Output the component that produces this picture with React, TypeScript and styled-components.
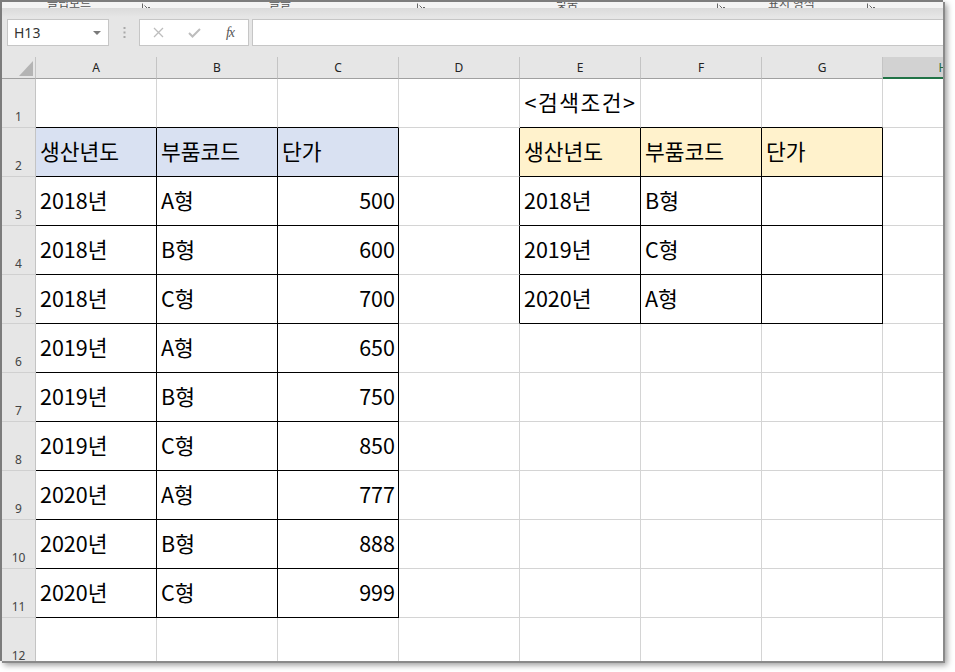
import * as React from 'react'
import styled, {createGlobalStyle} from 'styled-components'

const GlobalStyle = createGlobalStyle`
  html, body {
    margin: 0;
    padding: 0;
    background: #ffffff;
  }
  body {
    width: 955px;
    height: 672px;
    overflow: hidden;
    font-family: "Noto Sans", "Noto Sans CJK KR", sans-serif;
  }
`

const Window = styled.div`
  box-sizing: border-box;
  width: 943px;
  height: 661px;
  border-top: 2px solid #7c7c7c;
  border-left: 2px solid #7c7c7c;
  background: #e6e6e6;
  box-shadow: 2px 2px 0 #8a8a8a, 4px 4px 6px rgba(0, 0, 0, 0.4);
  overflow: hidden;
  display: flex;
  flex-direction: column;
`

// ---- ribbon remains (only the bottom edge of the group labels shows)

const Ribbon = styled.div`
  height: 6px;
  flex-shrink: 0;
  display: flex;
  overflow: hidden;
  background: #f3f3f3;
`

type RibbonGroupProps = {
  $width: number
  $labelLeft: number
}

const RibbonGroup = styled.div<RibbonGroupProps>`
  box-sizing: border-box;
  width: ${({$width}) => $width}px;
  height: 6px;
  flex-shrink: 0;
  display: flex;
  align-items: flex-end;
  justify-content: space-between;
  padding-left: ${({$labelLeft}) => $labelLeft}px;
  padding-right: 3px;
`

const GroupLabel = styled.span`
  font: 12px/12px "Noto Sans CJK KR", sans-serif;
  color: #555;
  white-space: nowrap;
  margin-bottom: -1px;
`

const Launcher = styled.svg`
  width: 8px;
  height: 8px;
  margin-bottom: -3px;
`

// ---- formula bar

const FormulaBar = styled.div`
  flex-shrink: 0;
  display: flex;
  height: 27px;
  padding: 11px 0 0 5px;
  background: linear-gradient(#dadada, #e6e6e6 9px);
`

const NameBox = styled.div`
  box-sizing: border-box;
  width: 102px;
  display: flex;
  align-items: center;
  justify-content: space-between;
  padding: 0 7px 0 6px;
  background: #ffffff;
  border: 1px solid #c6c6c6;
  font-size: 14px;
  color: #333;
`

const Caret = styled.span`
  width: 0;
  height: 0;
  border-left: 4px solid transparent;
  border-right: 4px solid transparent;
  border-top: 4px solid #7a7a7a;
`

const Grip = styled.div`
  width: 30px;
  display: flex;
  align-items: center;
  justify-content: center;
`

const FxBox = styled.div`
  box-sizing: border-box;
  width: 110px;
  display: flex;
  background: #ffffff;
  border: 1px solid #c6c6c6;
`

const IconSlot = styled.div`
  width: 36px;
  display: flex;
  align-items: center;
  justify-content: center;
`

const FxText = styled.span`
  font: italic 14px "Liberation Serif", serif;
  color: #555;
  letter-spacing: -1px;
`

const FormulaInput = styled.div`
  flex: 1;
  margin-left: 3px;
  background: #ffffff;
  border: 1px solid #c6c6c6;
  border-right: none;
`

// ---- sheet

const SheetArea = styled.div`
  padding-top: 11px;
`

const Grid = styled.div`
  display: grid;
  grid-template-columns: 34px repeat(8, 121px);
  grid-template-rows: 22px;
  grid-auto-rows: 49px;
`

const Corner = styled.div`
  box-sizing: border-box;
  display: flex;
  align-items: flex-end;
  justify-content: flex-end;
  padding: 0 2px 2px 0;
  border-right: 1px solid #c4c4c4;
  border-bottom: 1px solid #a0a0a0;
`

type ColHeaderProps = {
  $selected?: boolean
}

const ColHeader = styled.div<ColHeaderProps>`
  box-sizing: border-box;
  display: flex;
  align-items: center;
  justify-content: center;
  font-size: 12px;
  color: ${({$selected}) => ($selected ? '#1f6b40' : '#222')};
  background: ${({$selected}) => ($selected ? '#d2d2d2' : '#e6e6e6')};
  border-right: 1px solid #c4c4c4;
  border-bottom: ${({$selected}) =>
    $selected ? '2px solid #217346' : '1px solid #a0a0a0'};
`

const RowHeader = styled.div`
  box-sizing: border-box;
  display: flex;
  align-items: flex-end;
  justify-content: center;
  padding-bottom: 3px;
  font-size: 12px;
  line-height: 14px;
  color: #444;
  background: #e6e6e6;
  border-right: 1px solid #c4c4c4;
  border-bottom: 1px solid #d0d0d0;
`

type CellProps = {
  $align: 'left' | 'right' | 'center'
  $fill?: string
  $rightDark: boolean
  $bottomDark: boolean
}

const Cell = styled.div<CellProps>`
  box-sizing: border-box;
  display: flex;
  align-items: center;
  justify-content: ${({$align}) =>
    $align === 'right' ? 'flex-end' : $align === 'center' ? 'center' : 'flex-start'};
  padding: 0 3px 3px 4px;
  font-family: "Noto Sans CJK KR", "Noto Sans", sans-serif;
  font-size: 21.5px;
  color: #000;
  white-space: nowrap;
  background: ${({$fill}) => $fill || '#ffffff'};
  border-right: 1px solid ${({$rightDark}) => ($rightDark ? '#000' : '#d4d4d4')};
  border-bottom: 1px solid ${({$bottomDark}) => ($bottomDark ? '#000' : '#d4d4d4')};
`

const TitleText = styled.span`
  letter-spacing: 1.5px;
`

const COLUMNS = ['A', 'B', 'C', 'D', 'E', 'F', 'G', 'H']

const sheet: string[][] = [
  ['', '', '', '', '<검색조건>', '', '', ''],
  ['생산년도', '부품코드', '단가', '', '생산년도', '부품코드', '단가', ''],
  ['2018년', 'A형', '500', '', '2018년', 'B형', '', ''],
  ['2018년', 'B형', '600', '', '2019년', 'C형', '', ''],
  ['2018년', 'C형', '700', '', '2020년', 'A형', '', ''],
  ['2019년', 'A형', '650', '', '', '', '', ''],
  ['2019년', 'B형', '750', '', '', '', '', ''],
  ['2019년', 'C형', '850', '', '', '', '', ''],
  ['2020년', 'A형', '777', '', '', '', '', ''],
  ['2020년', 'B형', '888', '', '', '', '', ''],
  ['2020년', 'C형', '999', '', '', '', '', ''],
  ['', '', '', '', '', '', '', ''],
]

// bordered ranges, 0-based [rowFrom, rowTo, colFrom, colTo]
const borderedRanges = [
  [1, 10, 0, 2],
  [1, 4, 4, 6],
]

const inBordered = (r: number, c: number) =>
  borderedRanges.some(([r0, r1, c0, c1]) => r >= r0 && r <= r1 && c >= c0 && c <= c1)

const fillFor = (r: number, c: number) => {
  if (r !== 1) return undefined
  if (c <= 2) return '#d9e1f2'
  if (c >= 4 && c <= 6) return '#fff2cc'
  return undefined
}

const isTitle = (r: number, c: number) => r === 0 && c === 4

const alignFor = (r: number, c: number, value: string): 'left' | 'right' | 'center' => {
  if (isTitle(r, c)) return 'center'
  if (/^\d+$/.test(value)) return 'right'
  return 'left'
}

const ribbonGroups = [
  {label: '클립보드', width: 151, left: 45},
  {label: '글꼴', width: 275, left: 116},
  {label: '맞춤', width: 300, left: 128},
  {label: '표시 형식', width: 150, left: 40},
]

const LauncherIcon = () => (
  <Launcher viewBox="0 0 8 8">
    <path d="M0.5 0.5 V7.5 H7.5 V4" fill="none" stroke="#666" strokeWidth="1" />
    <path d="M2.5 2.5 L6.5 6.5 M4 6.5 H6.5 V4" fill="none" stroke="#666" strokeWidth="1" />
  </Launcher>
)

export default function App() {
  return (
    <>
      <GlobalStyle />
      <Window>
        <Ribbon>
          {ribbonGroups.map(g => (
            <RibbonGroup key={g.label} $width={g.width} $labelLeft={g.left}>
              <GroupLabel>{g.label}</GroupLabel>
              <LauncherIcon />
            </RibbonGroup>
          ))}
        </Ribbon>

        <FormulaBar>
          <NameBox>
            <span>H13</span>
            <Caret />
          </NameBox>
          <Grip>
            <svg width="3" height="11" viewBox="0 0 3 11">
              <rect x="0.5" y="0" width="2" height="2" fill="#a8a8a8" />
              <rect x="0.5" y="4.5" width="2" height="2" fill="#a8a8a8" />
              <rect x="0.5" y="9" width="2" height="2" fill="#a8a8a8" />
            </svg>
          </Grip>
          <FxBox>
            <IconSlot>
              <svg width="11" height="11" viewBox="0 0 11 11">
                <path d="M1 1 L10 10 M10 1 L1 10" stroke="#bdbdbd" strokeWidth="1.3" />
              </svg>
            </IconSlot>
            <IconSlot>
              <svg width="13" height="10" viewBox="0 0 13 10">
                <path d="M1 5 L4.5 8.5 L12 1" fill="none" stroke="#bdbdbd" strokeWidth="2" />
              </svg>
            </IconSlot>
            <IconSlot>
              <FxText>fx</FxText>
            </IconSlot>
          </FxBox>
          <FormulaInput />
        </FormulaBar>

        <SheetArea>
          <Grid>
            <Corner>
              <svg width="14" height="15" viewBox="0 0 14 15">
                <polygon points="14,0 14,15 0,15" fill="#b4b4b4" />
              </svg>
            </Corner>
            {COLUMNS.map(col => (
              <ColHeader key={col} $selected={col === 'H'}>
                {col}
              </ColHeader>
            ))}

            {sheet.map((row, r) => (
              <React.Fragment key={r}>
                <RowHeader>{r + 1}</RowHeader>
                {row.map((value, c) => (
                  <Cell
                    key={c}
                    $align={alignFor(r, c, value)}
                    $fill={fillFor(r, c)}
                    $rightDark={inBordered(r, c) || inBordered(r, c + 1)}
                    $bottomDark={inBordered(r, c) || inBordered(r + 1, c)}
                  >
                    {isTitle(r, c) ? <TitleText>{value}</TitleText> : value}
                  </Cell>
                ))}
              </React.Fragment>
            ))}
          </Grid>
        </SheetArea>
      </Window>
    </>
  )
}
